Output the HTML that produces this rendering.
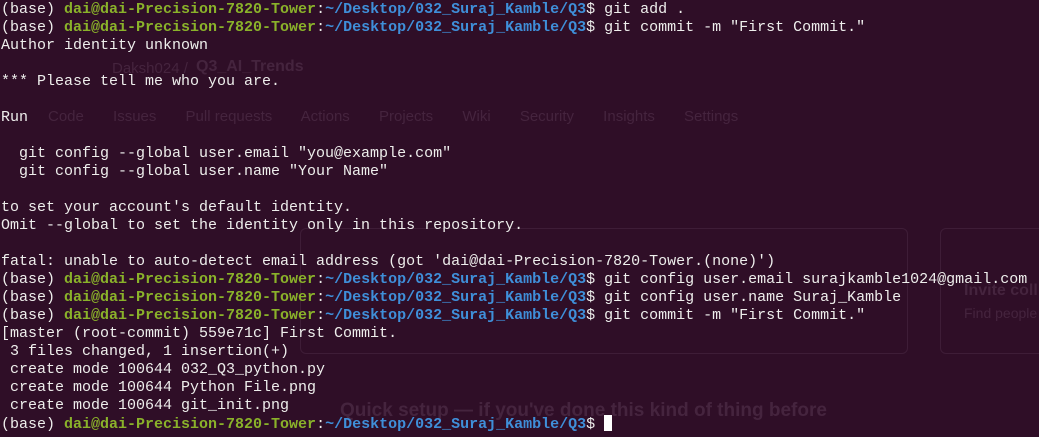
<!DOCTYPE html>
<html><head><meta charset="utf-8"><style>
html,body{margin:0;padding:0;}
body{width:1039px;height:437px;background:#2f0e27;overflow:hidden;position:relative;font-family:"Liberation Sans",sans-serif;}
.g{position:absolute;color:#45243e;font-weight:bold;}
.gl{position:absolute;color:#45243e;}
.box{position:absolute;border:1px solid #3e1d37;border-radius:6px;}
pre{position:absolute;left:1px;top:1px;margin:0;font-family:"Liberation Mono",monospace;font-size:15px;line-height:18px;color:#eeeeec;white-space:pre;}
.u{color:#8ab22a;font-weight:bold;}
.p{color:#3f8fd9;font-weight:bold;}
.c{display:inline-block;width:8px;height:16px;background:#fff;vertical-align:-3px;}
</style></head><body>
<div class="gl" style="left:112px;top:60px;font-size:15px">Daksh024 /</div>
<div class="g" style="left:196px;top:58px;font-size:16px">Q3_AI_Trends</div>
<div class="gl" style="left:48px;top:108px;font-size:15px">Code &nbsp;&nbsp;&nbsp;&nbsp;&nbsp; Issues &nbsp;&nbsp;&nbsp;&nbsp;&nbsp; Pull requests &nbsp;&nbsp;&nbsp;&nbsp;&nbsp; Actions &nbsp;&nbsp;&nbsp;&nbsp;&nbsp; Projects &nbsp;&nbsp;&nbsp;&nbsp;&nbsp; Wiki &nbsp;&nbsp;&nbsp;&nbsp;&nbsp; Security &nbsp;&nbsp;&nbsp;&nbsp;&nbsp; Insights &nbsp;&nbsp;&nbsp;&nbsp;&nbsp; Settings</div>
<div class="box" style="left:300px;top:228px;width:606px;height:124px"></div>
<div class="box" style="left:940px;top:228px;width:120px;height:124px"></div>
<div class="g" style="left:964px;top:282px;font-size:16px">Invite coll</div>
<div class="gl" style="left:964px;top:305px;font-size:14px">Find people</div>
<div class="g" style="left:340px;top:400px;font-size:19px">Quick setup — if you've done this kind of thing before</div>
<pre>(base) <span class="u">dai@dai-Precision-7820-Tower</span>:<span class="p">~/Desktop/032_Suraj_Kamble/Q3</span>$ git add .
(base) <span class="u">dai@dai-Precision-7820-Tower</span>:<span class="p">~/Desktop/032_Suraj_Kamble/Q3</span>$ git commit -m "First Commit."
Author identity unknown

*** Please tell me who you are.

Run

  git config --global user.email "you@example.com"
  git config --global user.name "Your Name"

to set your account's default identity.
Omit --global to set the identity only in this repository.

fatal: unable to auto-detect email address (got 'dai@dai-Precision-7820-Tower.(none)')
(base) <span class="u">dai@dai-Precision-7820-Tower</span>:<span class="p">~/Desktop/032_Suraj_Kamble/Q3</span>$ git config user.email surajkamble1024@gmail.com
(base) <span class="u">dai@dai-Precision-7820-Tower</span>:<span class="p">~/Desktop/032_Suraj_Kamble/Q3</span>$ git config user.name Suraj_Kamble
(base) <span class="u">dai@dai-Precision-7820-Tower</span>:<span class="p">~/Desktop/032_Suraj_Kamble/Q3</span>$ git commit -m "First Commit."
[master (root-commit) 559e71c] First Commit.
 3 files changed, 1 insertion(+)
 create mode 100644 032_Q3_python.py
 create mode 100644 Python File.png
 create mode 100644 git_init.png
(base) <span class="u">dai@dai-Precision-7820-Tower</span>:<span class="p">~/Desktop/032_Suraj_Kamble/Q3</span>$ <span class="c"></span></pre>
</body></html>
